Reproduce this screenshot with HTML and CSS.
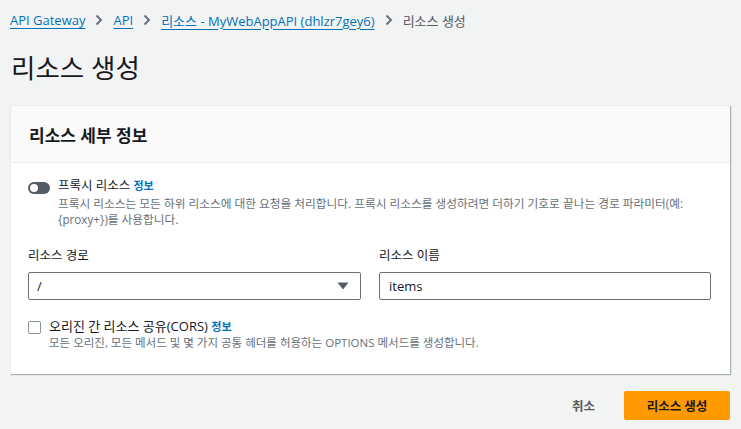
FILE: index.html
```html
<!DOCTYPE html>
<html lang="ko">
<head>
<meta charset="utf-8">
<link rel="stylesheet" href="styles.css">
</head>
<body>
<div class="page">
  <nav class="crumbs">
    <a class="crumb-link" href="#">API Gateway</a>
    <svg class="chev" width="8" height="12" viewBox="0 0 8 12"><path d="M1.5 1.5 L6 6 L1.5 10.5" fill="none" stroke="#687078" stroke-width="2"/></svg>
    <a class="crumb-link" href="#">API</a>
    <svg class="chev" width="8" height="12" viewBox="0 0 8 12"><path d="M1.5 1.5 L6 6 L1.5 10.5" fill="none" stroke="#687078" stroke-width="2"/></svg>
    <a class="crumb-link" href="#">리소스 - MyWebAppAPI (dhlzr7gey6)</a>
    <svg class="chev" width="8" height="12" viewBox="0 0 8 12"><path d="M1.5 1.5 L6 6 L1.5 10.5" fill="none" stroke="#687078" stroke-width="2"/></svg>
    <span class="crumb-current">리소스 생성</span>
  </nav>

  <h1 class="title">리소스 생성</h1>

  <section class="card">
    <header class="card-head">리소스 세부 정보</header>
    <div class="card-body">
      <div class="option">
        <span class="toggle"><span class="knob"></span></span>
        <div class="option-text">
          <div class="option-label">프록시 리소스 <a class="info" href="#">정보</a></div>
          <div class="option-desc">프록시 리소스는 모든 하위 리소스에 대한 요청을 처리합니다. 프록시 리소스를 생성하려면 더하기 기호로 끝나는 경로 파라미터(예:<br>{proxy+})를 사용합니다.</div>
        </div>
      </div>

      <div class="fields">
        <div class="field">
          <label class="field-label">리소스 경로</label>
          <div class="select">
            <span>/</span>
            <svg width="12" height="8" viewBox="0 0 12 8"><path d="M0.5 0.5 H11.5 L6 7.5 Z" fill="#545b64"/></svg>
          </div>
        </div>
        <div class="field">
          <label class="field-label">리소스 이름</label>
          <div class="input">items</div>
        </div>
      </div>

      <div class="option check-option">
        <span class="checkbox"></span>
        <div class="option-text">
          <div class="option-label">오리진 간 리소스 공유(CORS) <a class="info" href="#">정보</a></div>
          <div class="option-desc">모든 오리진, 모든 메서드 및 몇 가지 공통 헤더를 허용하는 OPTIONS 메서드를 생성합니다.</div>
        </div>
      </div>
    </div>
  </section>

  <div class="actions">
    <a class="cancel" href="#">취소</a>
    <button class="primary">리소스 생성</button>
  </div>
</div>
</body>
</html>
```

FILE: styles.css
```css
* { box-sizing: border-box; }
html, body { margin: 0; padding: 0; }
body {
  background: #f2f3f3;
  color: #16191f;
  font-family: "Open Sans", "Noto Sans CJK KR", sans-serif;
  width: 741px;
  height: 429px;
  overflow: hidden;
}
.page { padding: 11px 11px 0 10px; }

.crumbs {
  display: flex;
  align-items: center;
  gap: 10px;
  height: 18px;
  font-size: 13px;
}
.crumb-link {
  color: #0073bb;
  text-decoration: underline;
  text-underline-offset: 3px;
}
.crumb-current { color: #545b64; }
.chev { flex: none; }

.title {
  margin: 23px 0 0 1px;
  font-size: 26.5px;
  font-weight: 400;
  line-height: 32px;
  height: 53px;
}

.card {
  background: #fff;
  border-top: 1px solid #eaeded;
  border-left: 1px solid #eaeded;
  box-shadow: 1px 1px 1px 0 rgba(0, 28, 36, 0.3);
  width: 720px;
}
.card-head {
  background: #fafafa;
  height: 57px;
  border-bottom: 1px solid #eaeded;
  padding-left: 18px;
  display: flex;
  align-items: center;
  font-size: 17px;
  font-weight: 700;
}
.card-body { padding: 15px 18px 23px 17px; }

.option { display: flex; gap: 8px; align-items: flex-start; }
.toggle {
  flex: none;
  width: 22px;
  height: 12px;
  border-radius: 6px;
  background: #545b64;
  margin-top: 4px;
  position: relative;
}
.knob {
  position: absolute;
  left: 2px;
  top: 2px;
  width: 8px;
  height: 8px;
  border-radius: 50%;
  background: #fff;
}
.option-label { font-size: 12.5px; line-height: 16px; }
.info { color: #0073bb; font-weight: 700; font-size: 11px; text-decoration: none; }
.option-desc {
  color: #687078;
  font-size: 11.7px;
  line-height: 16px;
  margin-top: 1px;
  white-space: nowrap;
}

.fields {
  display: grid;
  grid-template-columns: 333px 332px;
  gap: 18px;
  margin-top: 20px;
}
.field-label { display: block; font-size: 12.5px; line-height: 18px; margin-bottom: 7px; }
.select, .input {
  height: 28px;
  border: 1px solid #687078;
  border-radius: 2px;
  font-size: 13px;
  display: flex;
  align-items: center;
  padding: 0 12px 0 8px;
}
.select { justify-content: space-between; padding-right: 11px; }
.input { padding-left: 9px; }

.check-option { margin-top: 18px; }
.checkbox {
  flex: none;
  width: 13px;
  height: 13px;
  border: 1px solid #879596;
  border-radius: 2px;
  margin-top: 3px;
}
.check-option .option-label { font-size: 13px; }
.check-option .option-desc { margin-top: 0; font-size: 11.5px; }

.actions {
  display: flex;
  justify-content: flex-end;
  align-items: center;
  gap: 29px;
  margin-top: 17px;
}
.cancel { color: #545b64; font-size: 12.5px; text-decoration: none; font-weight: 700; }
.primary {
  width: 106px;
  height: 29px;
  background: #ff9900;
  border: none;
  border-radius: 2px;
  color: #16191f;
  font-family: inherit;
  font-size: 12.5px;
  font-weight: 700;
}
```
